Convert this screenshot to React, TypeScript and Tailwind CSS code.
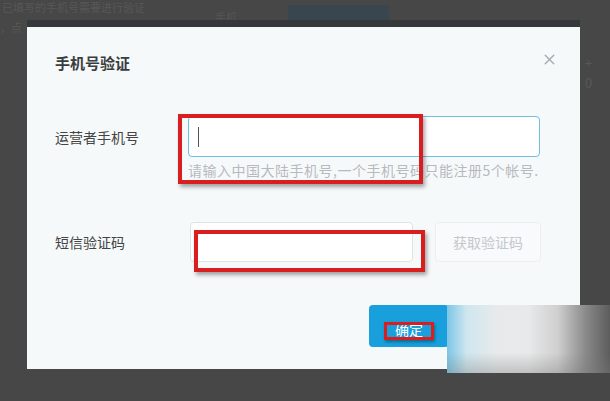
import { X } from "lucide-react";

const font = { fontFamily: '"Noto Sans CJK SC", "Noto Sans", sans-serif' };

export default function App() {
  return (
    <div
      className="relative h-[401px] w-[610px] overflow-hidden bg-[#474747]"
      style={font}
    >
      {/* Page behind the overlay */}
      <div className="flex h-[27px] items-start text-[11px] leading-[14px] text-[#575757]">
        <div className="flex w-[215px] flex-col">
          <span className="whitespace-nowrap pl-[2px]">
            已填写的手机号需要进行验证
          </span>
          <span className="mt-[6px] whitespace-nowrap">，点</span>
        </div>
        <span className="mt-[10px] text-[11px] text-[#555]">手机</span>
        <div className="ml-[51px] mt-[5px] h-[22px] w-[101px] bg-[#38474f]" />
      </div>
      <div className="ml-[585px] mt-[26px] flex flex-col text-[13px] leading-[20px] text-[#585858]">
        <span>+</span>
        <span>0</span>
      </div>

      {/* Modal */}
      <div className="absolute left-[27px] top-[20px] w-[553px] border-t-[7px] border-[#36393c] bg-[#f6f9fa]">
        <div className="h-[342px] pl-[1px]">
          <div className="flex items-center justify-between pl-[27px] pr-[22px] pt-[26px]">
            <h2 className="text-[15px] font-semibold leading-[20px] text-[#3a3d40]">
              手机号验证
            </h2>
            <X className="-mt-[8px] h-[17px] w-[17px] text-[#a8acb0]" strokeWidth={2} />
          </div>

          {/* Phone row */}
          <div className="mt-[43px] flex pl-[27px]">
            <label className="mt-[11px] w-[133px] text-[14px] leading-[20px] text-[#444]">
              运营者手机号
            </label>
            <div className="flex flex-col">
              <div className="flex h-[41px] w-[352px] items-center rounded-[4px] border border-[#6cbfdf] bg-white pl-[9px]">
                <span className="h-[20px] w-[1px] bg-[#555]" />
              </div>
              <p className="mt-[4px] whitespace-nowrap text-[14px] leading-[18px] tracking-[0.5px] text-[#b6babe]">
                请输入中国大陆手机号,一个手机号码只能注册5个帐号.
              </p>
            </div>
          </div>

          {/* SMS row */}
          <div className="mt-[43px] flex items-center pl-[27px]">
            <label className="w-[135px] text-[14px] leading-[20px] text-[#444]">
              短信验证码
            </label>
            <div className="h-[40px] w-[223px] rounded-[4px] border border-[#e0e3e6] bg-white" />
            <button className="ml-[22px] h-[40px] w-[106px] rounded-[4px] border border-[#eceef0] bg-[#f8fafb] text-[14px] text-[#c4c8cc]">
              获取验证码
            </button>
          </div>

          {/* Footer */}
          <div className="mt-[43px] flex pl-[341px]">
            <button className="h-[42px] w-[80px] rounded-[4px] bg-[#19a0dc] pt-[6px] text-[14px] text-white">
              确定
            </button>
          </div>
        </div>
      </div>

      {/* Watermark fade */}
      <div className="absolute left-[447px] top-[305px] h-[68px] w-[163px] bg-[linear-gradient(90deg,#7cc6e6_0%,#cfe6ef_12%,#e7eaeb_30%,#e8e9ea_50%,#cfcfcf_68%,#8a8a8a_85%,#5c5c5c_100%)]" />
      <div className="absolute left-[447px] top-[305px] h-[68px] w-[163px] bg-[linear-gradient(180deg,rgba(255,255,255,0)_0%,rgba(255,255,255,0)_70%,rgba(120,120,120,0.35)_100%)]" />

      {/* Red annotation boxes */}
      <div className="absolute left-[178px] top-[114px] h-[70px] w-[245px] border-[4px] border-[#d81e1e] shadow-[2px_3px_4px_rgba(0,0,0,0.35)]" />
      <div className="absolute left-[194px] top-[230px] h-[42px] w-[231px] border-[4px] border-[#d81e1e] shadow-[2px_3px_4px_rgba(0,0,0,0.35)]" />
      <div className="absolute left-[384px] top-[322px] h-[18px] w-[50px] border-[3px] border-[#d81e1e] shadow-[1px_2px_3px_rgba(0,0,0,0.35)]" />
    </div>
  );
}
